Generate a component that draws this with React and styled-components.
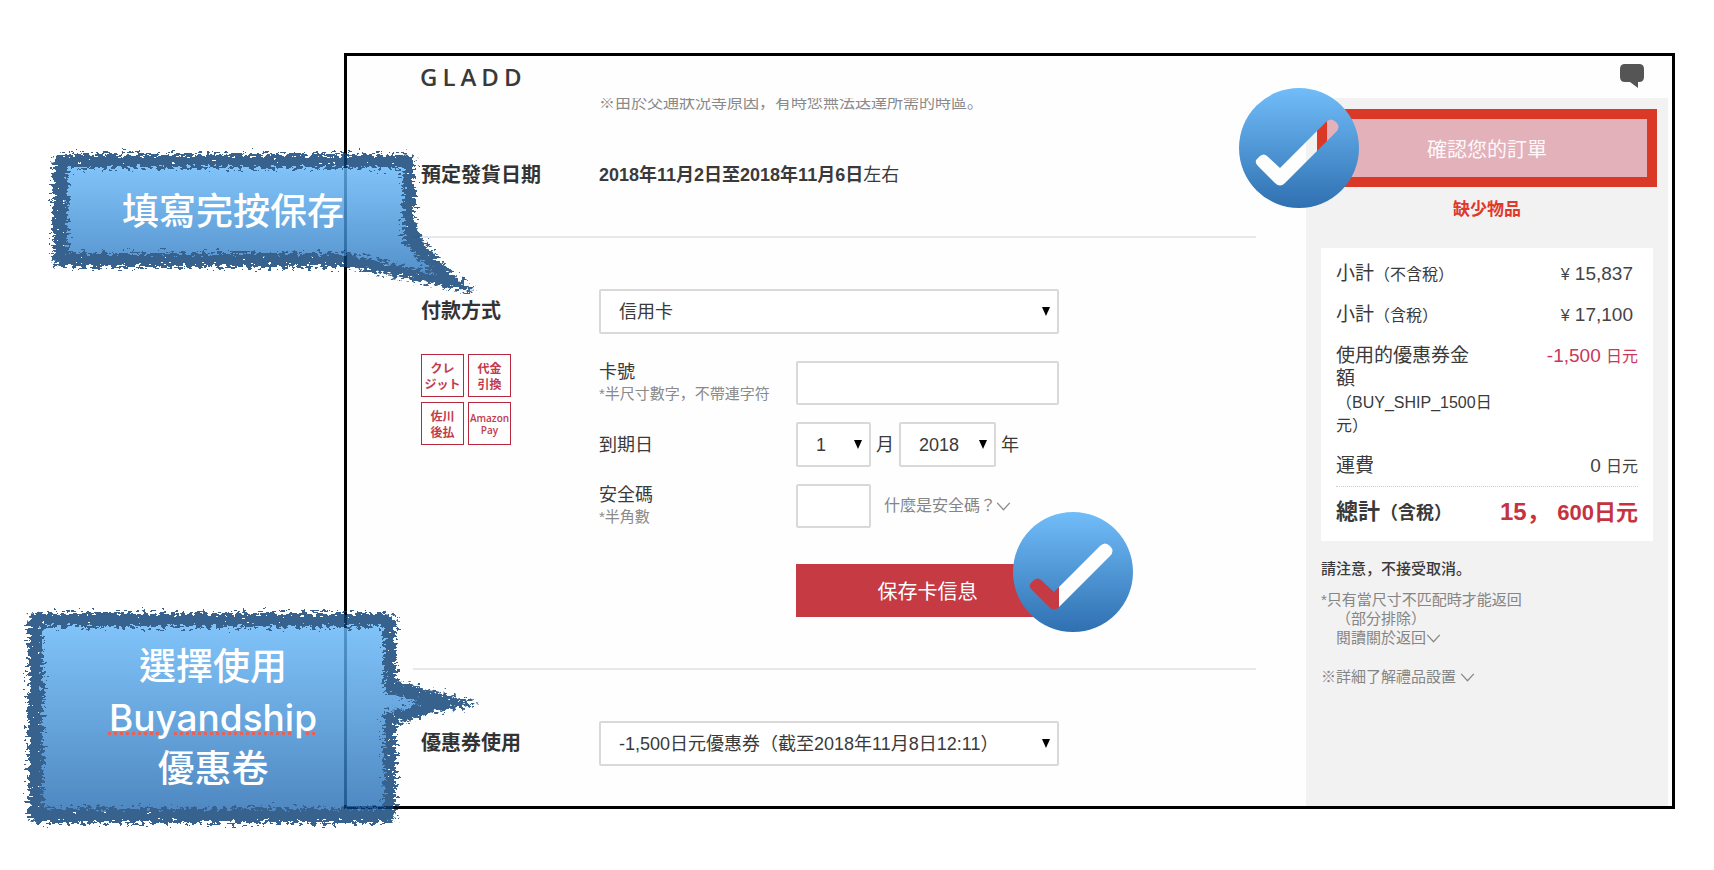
import React from 'react';
import styled, { createGlobalStyle } from 'styled-components';

const badges = [
    ['クレ', 'ジット'],
    ['代金', '引換'],
    ['佐川', '後払'],
    ['Amazon', 'Pay'],
];

const Chevron = () => (
    <ChevronIcon viewBox="0 0 16 10" aria-hidden="true">
        <path d="M1 1 L8 8.5 L15 1" />
    </ChevronIcon>
);

const SelectBox = ({ id, label, value, width }) => (
    <SelectWrap $width={width}>
        <Select id={id} aria-label={label} defaultValue={value}>
            <option>{value}</option>
        </Select>
        <Arrow viewBox="0 0 8 9" aria-hidden="true">
            <path d="M0 0 H8 L4 9 Z" />
        </Arrow>
    </SelectWrap>
);

// blue disc with the tick cut out of it, so what is below shows through
const CheckBadge = ({ id, left, top }) => (
    <Badge viewBox="0 0 120 120" $left={left} $top={top} aria-hidden="true">
        <defs>
            <linearGradient id={id} x1="0" y1="0" x2="0" y2="1">
                <stop offset="0" stopColor="#71bdf9" />
                <stop offset="1" stopColor="#2f70b1" />
            </linearGradient>
        </defs>
        <path
            fill={`url(#${id})`}
            fillRule="evenodd"
            d="M60 0 A60 60 0 0 1 60 120 A60 60 0 0 1 60 0 Z
               M28 68 L41 80 L87 34 Q92 29 97 34 Q102 39 97 44 L46 95 Q41 100 36 95 L19 78 Q15 74 18 71 L21 68 Q25 65 28 68 Z"
        />
    </Badge>
);

const Bubble = ({ id, width, height, outer, inner, seed, bottom }) => (
    <BubbleShape viewBox={`0 0 ${width} ${height}`} aria-hidden="true">
        <defs>
            <linearGradient id={`${id}-fill`} x1="0" y1="0" x2="0" y2="1">
                <stop offset="0" stopColor="#64b6f8" />
                <stop offset="1" stopColor={bottom} />
            </linearGradient>
            <filter id={`${id}-brush`} x="-5%" y="-5%" width="110%" height="110%">
                <feTurbulence type="fractalNoise" baseFrequency="0.2 0.36" numOctaves="4" seed={seed} result="noise" />
                <feDisplacementMap in="SourceGraphic" in2="noise" scale="18" xChannelSelector="R" yChannelSelector="G" />
            </filter>
        </defs>
        <g opacity="0.82">
            <path d={inner} fill={`url(#${id}-fill)`} stroke={`url(#${id}-fill)`} strokeWidth="8" />
            <path d={`${outer} ${inner}`} fill="#0f4176" fillRule="evenodd" filter={`url(#${id}-brush)`} />
        </g>
    </BubbleShape>
);

const App = () => {
    return (
        <Page>
            <GlobalStyle />
            <Frame>
                <Header>
                    <Logo>GLADD</Logo>
                    <ChatButton aria-label="chat">
                        <svg width="24" height="24" viewBox="0 0 24 24" aria-hidden="true">
                            <path fill="#555" d="M5 0 H19 Q24 0 24 5 V13 Q24 18 19 18 H18 V24 L10 18 H5 Q0 18 0 13 V5 Q0 0 5 0 Z" />
                        </svg>
                    </ChatButton>
                </Header>
                <Columns>
                    <Main>
                        <Notice>※由於交通狀況等原因，有時您無法送達所需的時區。</Notice>
                        <ShipSection>
                            <SectionTitle>預定發貨日期</SectionTitle>
                            <ShipDate><b>2018年11月2日至2018年11月6日</b>左右</ShipDate>
                        </ShipSection>

                        <Section>
                            <div>
                                <SectionTitle>付款方式</SectionTitle>
                                <PayList>
                                    {badges.map(([first, second]) => (
                                        <PayItem key={first} $latin={first === 'Amazon'}>
                                            <span>{first}<br />{second}</span>
                                        </PayItem>
                                    ))}
                                </PayList>
                            </div>
                            <Fields>
                                <SelectBox id="method" label="付款方式" value="信用卡" />
                                <CardFields>
                                    <Field>
                                        <label htmlFor="card">卡號<Hint>*半尺寸數字，不帶連字符</Hint></label>
                                        <Input id="card" />
                                    </Field>
                                    <Field $center>
                                        <label htmlFor="month">到期日</label>
                                        <Inline>
                                            <SelectBox id="month" label="月" value="1" width="75px" />
                                            <span>月</span>
                                            <SelectBox id="year" label="年" value="2018" width="97px" />
                                            <span>年</span>
                                        </Inline>
                                    </Field>
                                    <Field>
                                        <label htmlFor="code">安全碼<Hint>*半角數</Hint></label>
                                        <CodeRow>
                                            <Input id="code" $width="75px" />
                                            <HelpLink href="#code">什麼是安全碼？<Chevron /></HelpLink>
                                        </CodeRow>
                                    </Field>
                                </CardFields>
                                <SaveRow>
                                    <SaveButton>保存卡信息</SaveButton>
                                    <CheckBadge id="tick-save" left="217px" top="-52px" />
                                </SaveRow>
                            </Fields>
                        </Section>

                        <Section $last>
                            <SectionTitle>優惠券使用</SectionTitle>
                            <Fields>
                                <SelectBox id="coupon" label="優惠券使用" value="-1,500日元優惠券（截至2018年11月8日12:11）" />
                            </Fields>
                        </Section>
                    </Main>

                    <Sidebar>
                        <ConfirmWrap>
                            <ConfirmButton>確認您的訂單</ConfirmButton>
                            <CheckBadge id="tick-confirm" left="-88px" top="-31px" />
                        </ConfirmWrap>
                        <Missing>缺少物品</Missing>
                        <Summary>
                            <SumRow>
                                <dt>小計<Small>（不含稅）</Small></dt>
                                <Price $space><Small>¥</Small> 15,837</Price>
                            </SumRow>
                            <SumRow>
                                <dt>小計<Small>（含稅）</Small></dt>
                                <Price $space><Small>¥</Small> 17,100</Price>
                            </SumRow>
                            <SumRow>
                                <dt>
                                    使用的優惠券金<br />額<br />
                                    <Small>（BUY_SHIP_1500日<br />元）</Small>
                                </dt>
                                <Price $red>-1,500 <Small>日元</Small></Price>
                            </SumRow>
                            <SumRow>
                                <dt>運費</dt>
                                <Price>0 <Small>日元</Small></Price>
                            </SumRow>
                            <TotalRow>
                                <dt>總計<TotalSmall>（含稅）</TotalSmall></dt>
                                <Total>15， <TotalUnit>600日元</TotalUnit></Total>
                            </TotalRow>
                        </Summary>
                        <Notes>
                            <Strong>請注意，不接受取消。</Strong>
                            <p>*只有當尺寸不匹配時才能返回</p>
                            <Indent>（部分排除）</Indent>
                            <Indent><NoteLink href="#returns">閱讀關於返回<Chevron /></NoteLink></Indent>
                            <Gift><NoteLink href="#gift">※詳細了解禮品設置 <Chevron /></NoteLink></Gift>
                        </Notes>
                    </Sidebar>
                </Columns>

                <SaveCallout>
                    <Bubble
                        id="save"
                        width={430}
                        height={150}
                        seed={4}
                        bottom="#307ac0"
                        outer="M13 6 H358 Q368 6 368 16 L368 74 Q376 96 393 113 L428 145 Q376 134 300 119 H15 Q6 119 6 110 V15 Q6 6 13 6 Z"
                        inner="M21 20 H356 V92 Q369 112 389 126 Q340 113 298 105 H21 Z"
                    />
                    <CalloutText>填寫完按保存</CalloutText>
                </SaveCallout>

                <CouponCallout>
                    <Bubble
                        id="coupon-tip"
                        width={460}
                        height={226}
                        seed={9}
                        bottom="#2a70b6"
                        outer="M13 6 H364 Q374 6 374 16 V73 L400 81 L456 97 L410 106 L374 118 V206 Q374 216 365 216 H15 Q6 216 6 207 V15 Q6 6 13 6 Z"
                        inner="M21 20 H362 V85 L398 96 L362 106 V201 H21 Z"
                    />
                    <CalloutText>選擇使用<br /><Misspelt>Buyandship</Misspelt><br />優惠卷</CalloutText>
                </CouponCallout>
            </Frame>
        </Page>
    );
};

export default App;

// CSS STYLING

const GlobalStyle = createGlobalStyle`
    * {
        box-sizing: border-box;
    }
    body {
        margin: 0;
        background: #fff;
        color: #3a3a3a;
        font-family: "Liberation Sans", "Noto Sans CJK JP", sans-serif;
        font-size: 18px;
    }
    p, h1, h2, dl, dd, ul {
        margin: 0;
        padding: 0;
    }
    button, input, select {
        font: inherit;
        color: inherit;
    }
`;

const Page = styled.div`
    padding: 53px 39px 60px 344px;
`;

const Frame = styled.div`
    position: relative;
    border: 3px solid #000;
    background: #fefefe;
`;

const Header = styled.header`
    position: relative;
    z-index: 1;
    display: flex;
    justify-content: space-between;
    height: 42px;
    padding: 8px 28px 0 73px;
    background: #fefefe;
`;

const Logo = styled.h1`
    font-family: "Open Sans", sans-serif;
    font-size: 24px;
    font-weight: 600;
    line-height: 26px;
    letter-spacing: 5px;
`;

const ChatButton = styled.button`
    width: 24px;
    height: 24px;
    padding: 0;
    border: 0;
    background: none;
`;

const Columns = styled.div`
    display: grid;
    grid-template-columns: minmax(0, 1fr) 362px;
    padding-right: 4px;
`;

const Main = styled.main`
    padding: 0 50px 0 66px;
`;

const Notice = styled.p`
    margin-top: -7px;
    padding-left: 186px;
    font-size: 16px;
    line-height: 24px;
    color: #8a8a8a;
`;

const Section = styled.section`
    display: grid;
    grid-template-columns: 178px minmax(0, 1fr);
    padding: ${(props) => (props.$last ? '51px 0 40px 8px' : '51px 0 51px 8px')};
    border-bottom: ${(props) => (props.$last ? '0' : '2px solid #e8e8e8')};
`;

const ShipSection = styled(Section)`
    padding-top: 38px;
    padding-bottom: 38px;
`;

const SectionTitle = styled.h2`
    font-size: 20px;
    font-weight: bold;
    line-height: 45px;
    color: #333;
`;

const ShipDate = styled.p`
    line-height: 45px;
`;

const PayList = styled.ul`
    display: grid;
    grid-template-columns: 43px 43px;
    gap: 5px 4px;
    margin-top: 20px;
    list-style: none;
`;

const PayItem = styled.li`
    display: flex;
    align-items: center;
    justify-content: center;
    height: 43px;
    border: 1px solid #b8283c;
    font-family: ${(props) => (props.$latin ? '"Open Sans"' : '"Noto Sans CJK JP"')}, sans-serif;
    font-size: ${(props) => (props.$latin ? '10px' : '12px')};
    font-weight: ${(props) => (props.$latin ? '600' : 'bold')};
    line-height: ${(props) => (props.$latin ? '12px' : '16px')};
    text-align: center;
    color: #c23b4c;
`;

const Fields = styled.div`
    max-width: 460px;
`;

const SelectWrap = styled.div`
    position: relative;
    width: ${(props) => props.$width || '100%'};
`;

const Select = styled.select`
    display: block;
    width: 100%;
    height: 45px;
    padding: 0 18px;
    border: 2px solid #d9d9d9;
    border-radius: 2px;
    background: #fff;
    appearance: none;
`;

const Arrow = styled.svg`
    position: absolute;
    top: 18px;
    right: 9px;
    width: 8px;
    height: 9px;
    pointer-events: none;
`;

const CardFields = styled.div`
    display: flex;
    flex-direction: column;
    gap: 17px;
    margin-top: 27px;
`;

const Field = styled.div`
    display: grid;
    grid-template-columns: 197px minmax(0, 1fr);
    align-items: ${(props) => (props.$center ? 'center' : 'start')};
    line-height: 22px;
`;

const Hint = styled.span`
    display: block;
    font-size: 15px;
    color: #8a8a8a;
`;

const Input = styled.input`
    width: ${(props) => props.$width || '100%'};
    height: 44px;
    padding: 0 12px;
    border: 2px solid #d9d9d9;
    border-radius: 2px;
    background: #fff;
`;

const Inline = styled.div`
    display: flex;
    align-items: center;
    gap: 5px;
`;

const CodeRow = styled.div`
    display: flex;
    align-items: center;
    gap: 13px;
`;

const HelpLink = styled.a`
    font-size: 16px;
    color: #858585;
    text-decoration: none;
    white-space: nowrap;
`;

const ChevronIcon = styled.svg`
    width: 15px;
    height: 9px;
    fill: none;
    stroke: #8a8a8a;
    stroke-width: 1.5;
`;

const SaveRow = styled.div`
    position: relative;
    margin: 36px 0 0 197px;
`;

const SaveButton = styled.button`
    width: 100%;
    height: 53px;
    border: 0;
    background: #c63a44;
    font-size: 20px;
    color: #fff;
`;

const Badge = styled.svg`
    position: absolute;
    z-index: 2;
    left: ${(props) => props.$left};
    top: ${(props) => props.$top};
    width: 120px;
    height: 120px;
`;

const Sidebar = styled.aside`
    padding: 11px 11px 0;
    background: #f2f2f2;
`;

const ConfirmWrap = styled.div`
    position: relative;
    border: 10px solid #da3927;
`;

const ConfirmButton = styled.button`
    display: block;
    width: 100%;
    height: 58px;
    border: 0;
    background: #e2b1b9;
    font-size: 20px;
    color: #fff8f9;
`;

const Missing = styled.p`
    margin-top: 12px;
    font-size: 17px;
    font-weight: bold;
    line-height: 22px;
    text-align: center;
    color: #e0392b;
`;

const Summary = styled.dl`
    margin: 27px 4px 0;
    padding: 14px 15px 14px 15px;
    background: #fff;
`;

const SumRow = styled.div`
    display: flex;
    justify-content: space-between;
    height: auto;
    margin-bottom: 18px;
    font-size: 19px;
    line-height: 23px;
    white-space: nowrap;
`;

const Small = styled.span`
    font-size: 16px;
    line-height: 16px;
`;

const Price = styled.dd`
    padding-right: ${(props) => (props.$space ? '5px' : '0')};
    color: ${(props) => (props.$red ? '#c8385a' : '#444')};
`;

const TotalRow = styled(SumRow)`
    margin: -9px 0 0;
    padding-top: 10px;
    border-top: 1px dotted #ccc;
    font-size: 22px;
    font-weight: bold;
    line-height: 30px;
`;

const TotalSmall = styled.span`
    font-size: 18px;
    line-height: 18px;
`;

const Total = styled.dd`
    font-size: 24px;
    color: #c6333f;
`;

const TotalUnit = styled.span`
    font-size: 22px;
    line-height: 22px;
`;

const Notes = styled.div`
    margin: 18px 4px 0;
    font-size: 15px;
    line-height: 19px;
    color: #858585;
`;

const Strong = styled.p`
    margin-bottom: 12px;
    font-weight: 500;
    color: #3a3a3a;
`;

const Indent = styled.p`
    padding-left: 15px;
`;

const Gift = styled.p`
    margin-top: 20px;
`;

const NoteLink = styled.a`
    color: inherit;
    text-decoration: none;
`;

const Callout = styled.div`
    position: absolute;
    z-index: 3;
    display: flex;
    align-items: center;
    justify-content: center;
`;

const SaveCallout = styled(Callout)`
    left: -300px;
    top: 92px;
    width: 372px;
    height: 126px;
`;

const CouponCallout = styled(Callout)`
    left: -325px;
    top: 551px;
    width: 382px;
    height: 220px;
`;

const BubbleShape = styled.svg`
    position: absolute;
    left: 0;
    top: 0;
    width: ${(props) => props.viewBox.split(' ')[2]}px;
    height: ${(props) => props.viewBox.split(' ')[3]}px;
    overflow: visible;
`;

const CalloutText = styled.p`
    position: relative;
    font-family: Inter, "Noto Sans CJK TC", sans-serif;
    font-size: 37px;
    font-weight: 500;
    line-height: 51px;
    text-align: center;
    color: #fff;
`;

const Misspelt = styled.span`
    text-decoration: underline dotted #e2635c 3px;
    text-underline-offset: 1px;
`;
